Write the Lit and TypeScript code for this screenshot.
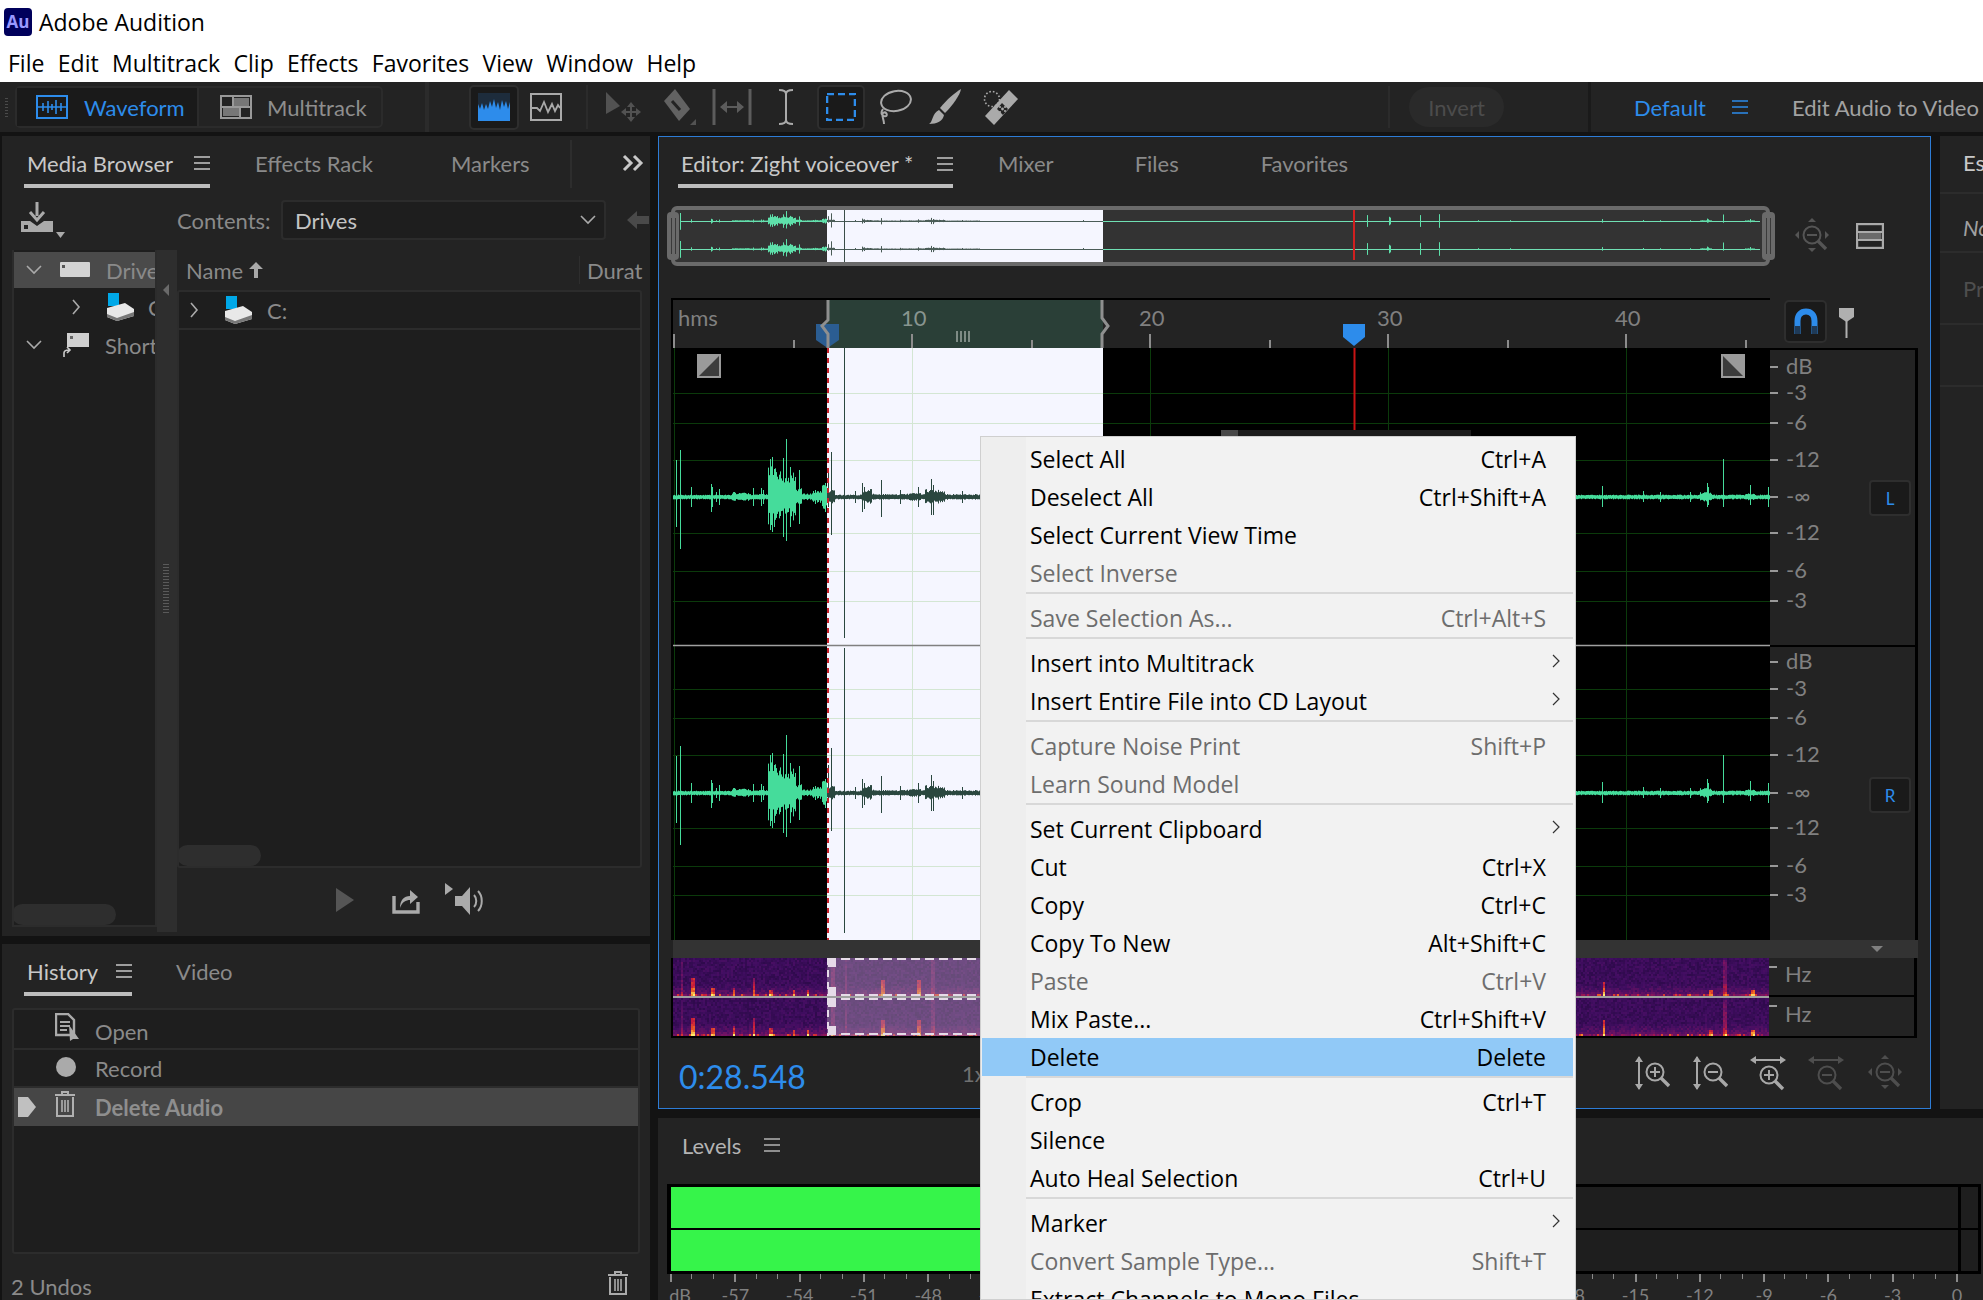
import { LitElement, html, css, svg } from "lit";
import { customElement } from "lit/decorators.js";

// spikes: x, up, down
const SPIKES: number[][] = [
  [676,37,30],[680,47,52],[691,10,10],[711,13,15],[712,10,10],[719,8,8],[716,5,5],[753,9,9],[761,9,9],[763,7,7],[770,38,33],[772,40,35],[774,28,30],
  [786,58,44],[783,39,40],[790,30,30],[799,27,27],[815,7,7],[825,14,15],[828,28,10],[831,45,38],[844,0,0],[855,6,6],[862,14,15],[864,10,12],[881,17,20],[900,7,7],[918,10,10],[931,18,18],[933,12,18],[962,6,6],[1083,6,6],
  [1367,35,35],[1389,25,25],[1390,20,20],[1420,35,35],[1439,40,40],[1478,5,5],[1510,5,5],[1602,11,10],[1643,6,5],[1660,5,5],[1690,5,5],[1707,14,10],[1708,10,8],[1723,38,10],[1750,12,8],[1768,10,10]
];
const SEGS: number[][] = [[732,750,5],[750,768,3],[768,778,31],[778,796,26],[796,802,9],[802,812,4],[812,822,6],[822,827,14],[827,835,8],[862,872,8],[872,880,4],[880,900,3],[900,925,4],[925,945,8],[945,980,3],[1700,1712,5],[1745,1755,4]];
// spectrogram spikes: x, reach (fraction of channel height), strength
const SPEC_SPIKES: number[][] = [[681,.95,.18],[692,.5,.42],[712,.22,.34],[733,.25,.3],[753,.5,.32],[770,.2,.3],[793,.18,.3],[807,.18,.3],[832,.9,.2],[845,.95,.16],[882,.45,.4],[918,.45,.36],[932,.95,.18],[1603,.42,.42],[1710,.18,.3],[1724,1,.26],[1752,.18,.36]];

function mkRand(seed: number) { let s = seed >>> 0; return () => { s = (s * 1664525 + 1013904223) >>> 0; return s / 4294967296; }; }

function wavePaths(cy: number, scale: number, min: number, seed: number) {
  const r = mkRand(seed);
  const inSel = (x: number) => x >= 827 && x < 1103;
  let g = ""; let d = "";
  for (let x = 673; x < 1770; x++) {
    let up = min + r() * min * 0.6; let dn = min + r() * min * 0.6;
    for (const s of SEGS) if (x >= s[0] && x < s[1]) { const a = s[2] * (0.55 + r() * 0.45) * scale; up = Math.max(up, a); dn = Math.max(dn, a * (0.7 + r() * 0.3)); }
    for (const p of SPIKES) if (p[0] === x && p[1] > 0) { up = Math.max(up, p[1] * scale); dn = Math.max(dn, p[2] * scale); }
    const seg = `M${x + 0.5} ${(cy - up).toFixed(1)}V${(cy + dn).toFixed(1)}`;
    if (inSel(x)) d += seg; else g += seg;
  }
  return { g, d };
}

const GRID_Y = [393, 423, 460, 533, 571, 601, 689, 718, 755, 828, 866, 895];
const GRID_X = [674, 912, 1150, 1388, 1626];

function waveSvg() {
  const a = wavePaths(497, 1, 1.5, 7);
  const b = wavePaths(793, 1, 1.5, 7);
  return html`<svg class="wave" viewBox="673 348 1097 592" width="1097" height="592">
    <rect x="827" y="348" width="276" height="592" fill="#f5f6ff"></rect>
    ${GRID_Y.map(y => svg`<path d="M673 ${y + .5}H827" stroke="#0b3a0b"></path><path d="M827 ${y + .5}H1103" stroke="#d3e6d3"></path><path d="M1103 ${y + .5}H1770" stroke="#0b3a0b"></path>`)}
    ${GRID_X.map(x => svg`<path d="M${x + .5} 348V940" stroke="${x > 827 && x < 1103 ? "#d3e6d3" : "#0b3a0b"}"></path>`)}
    <path d="M673 497.5H827M1103 497.5H1770M673 793.5H827M1103 793.5H1770" stroke="#45dc9b"></path>
    <path d=${a.g + b.g} stroke="#45dc9b" fill="none"></path>
    <path d="M827 497.5H1103M827 793.5H1103" stroke="#1f3a33" stroke-width="2"></path>
    <path d=${a.d + b.d} stroke="#2a473f" fill="none"></path>
    <path d="M844.5 348V638M844.5 648V933" stroke="#2a473f" fill="none"></path>
    <path d="M1354.5 348V600" stroke="#c81414" stroke-width="2"></path>
    <path d="M673 645.5H827" stroke="#a0a0a0" stroke-width="1.4"></path>
    <path d="M827 645.5H1103" stroke="#808080" stroke-width="1.4"></path>
    <path d="M1103 645.5H1770" stroke="#a0a0a0" stroke-width="1.4"></path>
    <path d="M828 348V940" stroke="#c8202a" stroke-width="2" stroke-dasharray="5 5"></path>
    <g>
      <rect x="697" y="354" width="24" height="24" fill="#9a9a9a"></rect><path d="M699 376L719 356V376Z" fill="#3c3c3c"></path>
      <rect x="1721" y="354" width="24" height="24" fill="#9a9a9a"></rect><path d="M1723 356L1743 376H1723Z" fill="#3c3c3c"></path>
    </g>
  </svg>`;
}

function overviewSvg() {
  const a = wavePaths(221, 0.17, 0.01, 3);
  const b = wavePaths(249, 0.17, 0.01, 3);
  return html`<svg class="ov" viewBox="664 204 1114 64" width="1114" height="64">
    <rect x="673" y="208" width="1095" height="56" rx="4" fill="#333" stroke="#6a6a6a" stroke-width="4"></rect>
    <rect x="827" y="210" width="276" height="52" fill="#f5f6ff"></rect>
    <path d="M680 221.5H827M1103 221.5H1760M680 249.5H827M1103 249.5H1760" stroke="#70e0b4"></path>
    <path d="M827 221.5H1103M827 249.5H1103" stroke="#4a5c57"></path>
    <path d=${a.g + b.g} stroke="#5ee0aa" fill="none"></path>
    <path d=${a.d + b.d} stroke="#4a5c57" fill="none"></path>
    <path d="M844.5 210V262" stroke="#3b4e49"></path>
    <path d="M1354 210V260" stroke="#d02020" stroke-width="2"></path>
    <rect x="667" y="212" width="12" height="48" rx="4" fill="#6a6a6a"></rect><path d="M671.5 218V254M675.5 218V254" stroke="#3a3a3a"></path>
    <rect x="1762" y="212" width="13" height="48" rx="4" fill="#6a6a6a"></rect><path d="M1766.5 218V254M1770.5 218V254" stroke="#3a3a3a"></path>
  </svg>`;
}

const TICKS_MAJOR = [674, 912, 1150, 1388, 1626];
const TICKS_MINOR = [794, 1032, 1270, 1508, 1746];
function rulerSvg() {
  return html`<svg class="rsvg" viewBox="673 300 1097 48" width="1097" height="48">
    <rect x="827" y="300" width="276" height="48" fill="#2a3f37"></rect>
    ${TICKS_MAJOR.map(x => svg`<path d="M${x} 334V348" stroke="#8c8c8c" stroke-width="2"></path>`)}
    ${TICKS_MINOR.map(x => svg`<path d="M${x} 340V348" stroke="#8c8c8c" stroke-width="2"></path>`)}
    <path d="M957 331V342M961 331V342M965 331V342M969 331V342" stroke="#9aa5a0" stroke-width="1.5"></path>
    <path d="M816 324H839V340L827.5 348L816 340Z" fill="#2b5d92"></path>
    <path d="M828 300V320L822 326L828 334V348" stroke="#8f8f8f" stroke-width="3" fill="none"></path>
    <path d="M1102 300V318L1108 326L1102 334V348" stroke="#8f8f8f" stroke-width="3" fill="none"></path>
    <path d="M1343 324H1365V337L1354 346L1343 337Z" fill="#2d8ceb"></path>
  </svg>`;
}

const I = {
  ham: html`<svg class="ham" viewBox="0 0 16 14" width="16" height="14"><path d="M0 1H16M0 7H16M0 13H16" stroke="currentColor" stroke-width="1.6"></path></svg>`,
  chevR: html`<svg viewBox="0 0 10 18" width="10" height="18"><path d="M2 2L8 9L2 16" fill="none" stroke="#aaa" stroke-width="1.6"></path></svg>`,
  chevD: html`<svg viewBox="0 0 16 10" width="16" height="10"><path d="M1 1L8 8L15 1" fill="none" stroke="#aaa" stroke-width="1.6"></path></svg>`,
  drive: html`<svg viewBox="0 0 30 28" width="30" height="28"><rect x="3" y="0" width="11" height="13" fill="#00a8e8"></rect><path d="M2 15L20 10L29 16V23L12 28L2 24Z" fill="#e8e8e8"></path><path d="M2 21L12 25L29 19V23L12 28L2 24Z" fill="#777"></path></svg>`,
};

const tb = {
  waveform: html`<svg viewBox="0 0 32 24" width="32" height="24"><rect x="1" y="1" width="30" height="22" fill="none" stroke="#2d8ceb" stroke-width="2"></rect><path d="M1 12H31M7 8V16M12 6V18M16 9V15M20 5V19M25 8V16" stroke="#2d8ceb" stroke-width="1.6"></path></svg>`,
  multi: html`<svg viewBox="0 0 32 24" width="32" height="24"><rect x="1" y="1" width="30" height="22" fill="none" stroke="#999" stroke-width="2"></rect><rect x="13" y="3" width="16" height="8" fill="#777"></rect><rect x="3" y="13" width="17" height="8" fill="#777"></rect><path d="M1 12H31M13 1V12M20 12V23" stroke="#999" stroke-width="2"></path></svg>`,
  vw: html`<svg viewBox="0 0 32 28" width="32" height="28"><rect x="0" y="0" width="32" height="28" fill="#2d8ceb"></rect><path d="M0 0H32V9L30 16L28 8L26 14L24 7L22 17L20 9L18 15L16 6L14 14L12 8L10 16L8 11L6 17L4 10L2 16L0 11Z" fill="#1d2c3c"></path></svg>`,
  vw2: html`<svg viewBox="0 0 32 28" width="32" height="28"><rect x="1" y="1" width="30" height="26" fill="none" stroke="#aaa" stroke-width="2"></rect><path d="M2 15H7L10 18L14 9L18 19L22 11L25 18L28 12L30 15" fill="none" stroke="#aaa" stroke-width="1.8"></path></svg>`,
  move: html`<svg viewBox="0 0 36 30" width="36" height="30"><path d="M1 0L15 14L1 22Z" fill="#525252"></path><path d="M26 12V29M18 20H35" stroke="#525252" stroke-width="2"></path><path d="M26 10L22 15H30ZM26 30L22 25H30ZM16 20L21 16V24ZM36 20L31 16V24Z" fill="#525252"></path></svg>`,
  razor: html`<svg viewBox="0 0 34 36" width="34" height="36"><path d="M2 12L13 0L28 20L17 32Z" fill="#626262"></path><path d="M10 12L18 21" stroke="#232323" stroke-width="3"></path><path d="M34 30V36H28Z" fill="#525252"></path></svg>`,
  slip: html`<svg viewBox="0 0 40 36" width="40" height="36"><path d="M2 0V36M38 0V36" stroke="#5c5c5c" stroke-width="3"></path><path d="M9 18H31" stroke="#5c5c5c" stroke-width="2"></path><path d="M8 18L15 12V24ZM32 18L25 12V24Z" fill="#5c5c5c"></path></svg>`,
  ibeam: html`<svg viewBox="0 0 20 36" width="20" height="36"><path d="M3 1C7 1 10 2 10 5V31C10 34 7 35 3 35M17 1C13 1 10 2 10 5M17 35C13 35 10 34 10 31" fill="none" stroke="#aaa" stroke-width="2"></path></svg>`,
  marquee: html`<svg viewBox="0 0 30 28" width="30" height="28"><rect x="1" y="1" width="28" height="26" fill="none" stroke="#2d8ceb" stroke-width="2.6" stroke-dasharray="7 4"></rect></svg>`,
  lasso: html`<svg viewBox="0 0 36 36" width="36" height="36"><ellipse cx="20" cy="12" rx="15" ry="10" transform="rotate(-10 20 12)" fill="none" stroke="#aaa" stroke-width="2"></ellipse><path d="M7 20C4 24 6 28 10 27C12 26 10 22 7 24C5 26 8 30 8 35" fill="none" stroke="#aaa" stroke-width="2"></path></svg>`,
  brush: html`<svg viewBox="0 0 34 36" width="34" height="36"><path d="M32 0C31 6 24 16 16 24L11 19C18 10 27 3 32 0Z" fill="#aaa"></path><path d="M10 21L15 26C14 32 8 35 0 35C4 33 3 24 10 21Z" fill="#aaa"></path></svg>`,
  heal: html`<svg viewBox="0 0 36 36" width="36" height="36"><circle cx="9" cy="10" r="7.5" fill="none" stroke="#aaa" stroke-width="1.6" stroke-dasharray="1.6 2"></circle><path d="M26 1L35 10L11 36L2 27Z" fill="#aaa"></path><path d="M14 20L19 14L25 20L20 26Z" fill="#232323"></path><circle cx="19.5" cy="20" r="1.4" fill="#aaa"></circle><circle cx="17" cy="18" r="1.1" fill="#aaa"></circle><circle cx="22" cy="18" r="1.1" fill="#aaa"></circle><circle cx="17" cy="23" r="1.1" fill="#aaa"></circle><circle cx="22" cy="22" r="1.1" fill="#aaa"></circle></svg>`,
};

function zoomIcon(kind: "vp" | "vm" | "hp" | "hm" | "all", color: string) {
  const plus = kind === "vp" || kind === "hp";
  const v = kind === "vp" || kind === "vm";
  const h = kind === "hp" || kind === "hm";
  const cx = v ? 21 : 19; const cy = v ? 17 : h ? 20 : 17;
  return html`<svg viewBox="0 0 36 36" width="36" height="36" fill="none" stroke=${color}>
    ${v ? svg`<path d="M5 2V34" stroke-width="2"></path><path d="M5 1L1 7H9ZM5 35L1 29H9Z" fill=${color} stroke="none"></path>` : ""}
    ${h ? svg`<path d="M2 5H34" stroke-width="2"></path><path d="M0 5L6 1V9ZM36 5L30 1V9Z" fill=${color} stroke="none"></path>` : ""}
    ${kind === "all" ? svg`<path d="M19 0L15 4H23ZM19 34L15 30H23ZM2 17L6 13V21ZM36 17L32 13V21Z" fill=${color} stroke="none"></path>` : ""}
    <circle cx=${cx} cy=${cy} r="8.5" stroke-width="2"></circle>
    <path d=${`M${cx - 5} ${cy}H${cx + 5}`} stroke-width="2"></path>
    ${plus ? svg`<path d=${`M${cx} ${cy - 5}V${cy + 5}`} stroke-width="2"></path>` : ""}
    <path d=${`M${cx + 6} ${cy + 6}L${cx + 14} ${cy + 14}`} stroke-width="3.4"></path>
  </svg>`;
}

type MI = { t?: string; k?: string; d?: boolean; sub?: boolean; hot?: boolean; sep?: boolean };
const MENU: MI[] = [
  { t: "Select All", k: "Ctrl+A" }, { t: "Deselect All", k: "Ctrl+Shift+A" }, { t: "Select Current View Time" }, { t: "Select Inverse", d: true }, { sep: true },
  { t: "Save Selection As...", k: "Ctrl+Alt+S", d: true }, { sep: true },
  { t: "Insert into Multitrack", sub: true }, { t: "Insert Entire File into CD Layout", sub: true }, { sep: true },
  { t: "Capture Noise Print", k: "Shift+P", d: true }, { t: "Learn Sound Model", d: true }, { sep: true },
  { t: "Set Current Clipboard", sub: true }, { t: "Cut", k: "Ctrl+X" }, { t: "Copy", k: "Ctrl+C" }, { t: "Copy To New", k: "Alt+Shift+C" }, { t: "Paste", k: "Ctrl+V", d: true }, { t: "Mix Paste...", k: "Ctrl+Shift+V" }, { t: "Delete", k: "Delete", hot: true }, { sep: true },
  { t: "Crop", k: "Ctrl+T" }, { t: "Silence" }, { t: "Auto Heal Selection", k: "Ctrl+U" }, { sep: true },
  { t: "Marker", sub: true }, { t: "Convert Sample Type...", k: "Shift+T", d: true }, { t: "Extract Channels to Mono Files" },
];

const DB1: [string, number][] = [["dB", 366], ["-3", 392], ["-6", 422], ["-12", 459], ["-∞", 496], ["-12", 532], ["-6", 570], ["-3", 600]];
const DB2: [string, number][] = [["dB", 661], ["-3", 688], ["-6", 717], ["-12", 754], ["-∞", 792], ["-12", 827], ["-6", 865], ["-3", 894]];
const RULER_LABELS: [string, number][] = [["hms", 678], ["10", 901], ["20", 1139], ["30", 1377], ["40", 1615]];
const LEVEL_VALUES = [-57, -54, -51, -48, -45, -42, -39, -36, -33, -30, -27, -24, -21, -18, -15, -12, -9, -6, -3, 0];

function drawSpec(c: HTMLCanvasElement) {
  const ctx = c.getContext("2d")!;
  const W = c.width;
  const stops: [number, number[]][] = [[0, [22, 6, 48]], [0.28, [66, 14, 98]], [0.5, [120, 20, 100]], [0.68, [200, 28, 60]], [0.84, [245, 110, 30]], [1, [255, 235, 110]]];
  const cmap = (v: number) => {
    v = Math.max(0, Math.min(1, v));
    for (let i = 1; i < stops.length; i++) if (v <= stops[i][0]) {
      const [a, ca] = stops[i - 1]; const [b, cb] = stops[i]; const t = (v - a) / (b - a);
      return ca.map((q, j) => q + (cb[j] - q) * t);
    }
    return stops[stops.length - 1][1];
  };
  const r = mkRand(11);
  for (const [y0, ch] of [[0, 38], [40, 37]] as number[][]) {
    for (let y = 0; y < ch; y += 2) {
      const t = y / ch;
      for (let x = 0; x < W; x += 2) {
        const px = x + 673;
        let v = 0.16 + r() * 0.15;
        if (t > 0.68) v += (t - 0.68) * 0.62;
        if (t > 0.94) v += 0.14 * r() + (r() > 0.75 ? 0.25 : 0);
        for (const s of SPEC_SPIKES) {
          if (Math.abs(px - s[0]) <= 1) { if (1 - t < s[1]) v += s[2] * (0.7 + 0.6 * t); }
        }
        let col = cmap(v);
        if (px >= 827 && px < 1103) col = col.map((q, j) => q * 0.62 + [255, 240, 255][j] * 0.38 * 0.75);
        ctx.fillStyle = `rgb(${col[0] | 0},${col[1] | 0},${col[2] | 0})`;
        ctx.fillRect(x, y0 + y, 2, 2);
      }
    }
    // selection outline
    ctx.fillStyle = "#e6dbe8";
    for (let x = 154; x < 430; x += 14) { ctx.fillRect(x, y0, 9, 2); ctx.fillRect(x, y0 + ch - 2, 9, 2); }
    for (let y = 0; y < ch; y += 12) { ctx.fillRect(154, y0 + y, 2, 7); }
    ctx.fillRect(155, y0 + 1, 8, 8); ctx.fillRect(155, y0 + ch - 9, 8, 8);
  }
  ctx.fillStyle = "#a0a0a0"; ctx.fillRect(0, 38, W, 2);
}

@customElement("app-root")
export class AppRoot extends LitElement {
  static styles = css`
    :host { display: block; width: 1983px; height: 1300px; position: relative; overflow: hidden; background: #131313; font-family: "Lato", sans-serif; font-size: 22px; color: #8a8a8a; }
    svg { display: block; flex: none; }
    .sys { font-family: "Open Sans", sans-serif; color: #000; background: #fff; }
    .title { height: 42px; display: flex; align-items: center; padding-left: 4px; gap: 7px; font-size: 23px; box-sizing: border-box; padding-top: 1px; }
    .au { width: 28px; height: 28px; border-radius: 4px; background: #00005b; color: #9999ff; font-size: 17px; font-weight: 700; display: flex; align-items: center; justify-content: center; font-family: "Open Sans", sans-serif; }
    .menubar { height: 40px; display: flex; align-items: center; padding: 2px 0 0 8px; gap: 13.4px; font-size: 23px; box-sizing: border-box; }
    .toolbar { height: 50px; background: #232323; display: flex; align-items: center; position: relative; white-space: nowrap; padding-left: 15px; box-sizing: border-box; }
    .grip { position: absolute; left: 5px; top: 16px; width: 3px; height: 20px; background: repeating-linear-gradient(#4a4a4a 0 1px, transparent 1px 3px); }
    .seg { display: flex; height: 42px; width: 368px; border: 2px solid #2b2b2b; box-sizing: border-box; border-radius: 5px; }
    .seg > div { display: flex; align-items: center; }
    .seg .on { width: 180px; background: #1a1a1a; color: #2d8ceb; padding-left: 19px; gap: 16px; box-sizing: border-box; }
    .seg .off { flex: 1; border-left: 2px solid #2b2b2b; color: #8e8e8e; padding-left: 21px; gap: 15px; }
    .tbtn { display: flex; align-items: center; justify-content: center; flex: none; }
    .tbtn.act { background: #1a1a1a; border: 2px solid #2e2e2e; border-radius: 5px; height: 45px; box-sizing: border-box; }
    .dv { height: 50px; background: #2b2b2b; flex: none; width: 4px; }
    .dv.d1 { margin-left: 42px; }
    .t1 { margin-left: 40px; width: 50px; }
    .t2 { margin-left: 11px; width: 32px; }
    .dv.d2 { margin-left: 24px; width: 2px; height: 44px; }
    .t3 { margin-left: 17px; width: 36px; }
    .t4 { margin-left: 21px; width: 34px; }
    .t5 { margin-left: 16px; width: 40px; }
    .t6 { margin-left: 24px; width: 20px; }
    .t7 { margin-left: 21px; width: 48px; }
    .t8 { margin-left: 11px; width: 36px; }
    .t9 { margin-left: 16px; width: 36px; }
    .t10 { margin-left: 18px; width: 38px; }
    .dv.d3 { margin-left: 368px; width: 2px; height: 42px; }
    .invert { margin-left: 19px; width: 95px; height: 40px; border-radius: 20px; background: #2a2a2a; color: #4c4c4c; display: flex; align-items: center; justify-content: center; flex: none; }
    .dv.d4 { margin-left: 84px; width: 3px; background: #1a1a1a; }
    .def { margin-left: 43px; color: #2d8ceb; display: flex; align-items: center; gap: 26px; flex: none; }
    .edit { margin-left: 44px; color: #a2a2a2; flex: none; }
    .work { display: flex; padding: 4px 0 0 2px; gap: 8px; height: 1218px; box-sizing: border-box; }
    .leftcol { width: 648px; flex: none; display: flex; flex-direction: column; gap: 8px; }
    .panel { background: #232323; box-sizing: border-box; }
    .mb { height: 800px; display: flex; flex-direction: column; }
    .tabs { display: flex; align-items: flex-end; height: 52px; box-sizing: border-box; position: relative; flex: none; }
    .tab { height: 52px; box-sizing: border-box; display: flex; align-items: center; padding: 6px 0 4px; white-space: nowrap; flex: none; }
    .tab.on { color: #c8c8c8; border-bottom: 4px solid #bdbdbd; padding-bottom: 0; justify-content: space-between; padding-left: 3px; }
    .tabs.m { padding-left: 22px; }
    .tabs.m .tab.on { width: 186px; }
    .tabs.m .e { margin-left: 45px; }
    .tabs.m .k { margin-left: 78px; }
    .tabs.m .vd { position: absolute; left: 568px; top: 4px; width: 2px; height: 48px; background: #2d2d2d; }
    .tabs.m .more { position: absolute; left: 620px; top: 18px; }
    .ctr { display: flex; align-items: center; height: 40px; margin-top: 12px; flex: none; padding-left: 19px; }
    .ctr .lbl { margin-left: 112px; width: 104px; flex: none; }
    .dropdown { width: 325px; height: 40px; background: #1e1e1e; border: 2px solid #2c2c2c; border-radius: 4px; box-sizing: border-box; color: #c4c4c4; display: flex; align-items: center; justify-content: space-between; padding: 0 8px 0 12px; }
    .back { margin-left: 21px; }
    .split { display: flex; margin-top: 10px; padding-left: 10px; height: 682px; }
    .tree { width: 145px; height: 677px; background: #1e1e1e; border: 2px solid #2c2c2c; border-top: none; box-sizing: border-box; position: relative; overflow: hidden; flex: none; }
    .trow { height: 38px; display: flex; align-items: center; white-space: nowrap; overflow: hidden; }
    .trow.on { background: #4a4a4a; height: 36px; margin-top: 2px; }
    .trow .c { width: 16px; display: flex; justify-content: center; flex: none; }
    .sp1 { margin-left: 12px; }
    .sp2 { margin-left: 54px; }
    .ti1 { margin-left: 18px; }
    .tl1 { margin-left: 16px; }
    .ti2 { margin-left: 21px; flex: none; }
    .tl2 { margin-left: 13px; }
    .ti3 { margin-left: 21px; }
    .tl3 { margin-left: 16px; }
    .thumb { background: #2e2e2e; border-radius: 11px; position: absolute; height: 21px; }
    .tree .thumb { left: -2px; bottom: 0; width: 104px; }
    .splitter { width: 20px; background: #2e2e2e; flex: none; position: relative; }
    .splitter .a { position: absolute; left: 6px; top: 34px; width: 0; height: 0; border: 6px solid transparent; border-right-color: #6a6a6a; border-left: none; }
    .splitter .dots { position: absolute; left: 6px; top: 314px; width: 6px; height: 50px; background: repeating-linear-gradient(#5a5a5a 0 1px, transparent 1px 3px); }
    .rightc { width: 465px; flex: none; display: flex; flex-direction: column; }
    .lh { height: 40px; display: flex; align-items: center; position: relative; padding-left: 9px; gap: 5px; box-sizing: border-box; flex: none; }
    .lh .dur { position: absolute; left: 410px; }
    .lh .vd { position: absolute; left: 402px; top: 6px; width: 1px; height: 28px; background: #2e2e2e; }
    .list { height: 578px; background: #1e1e1e; border: 2px solid #2c2c2c; border-radius: 3px; box-sizing: border-box; position: relative; overflow: hidden; }
    .list .thumb { left: -2px; bottom: 0; width: 84px; }
    .lrow { height: 38px; border-bottom: 2px solid #2c2c2c; display: flex; align-items: center; box-sizing: border-box; padding-left: 10px; }
    .lr1 { margin-left: 24px; }
    .lr2 { margin-left: 14px; }
    .trans { height: 64px; display: flex; align-items: center; padding-left: 159px; }
    .trans .p2 { margin-left: 38px; }
    .trans .p3 { margin-left: 25px; }
    .hist { height: 356px; display: flex; flex-direction: column; position: relative; }
    .tabs.h { padding-left: 22px; height: 52px; }
    .tabs.h .tab.on { width: 108px; }
    .tabs.h .v { margin-left: 44px; }
    .hlist { margin: 12px 10px 0; height: 246px; background: #1e1e1e; border: 2px solid #2c2c2c; border-radius: 3px; box-sizing: border-box; flex: none; }
    .hrow { height: 38px; border-bottom: 2px solid #2c2c2c; display: flex; align-items: center; box-sizing: border-box; position: relative; padding-left: 81px; }
    .hrow .ic { position: absolute; left: 41px; top: 3px; }
    .hrow .ic.rec { top: 5px; }
    .hrow.on { background: #464646; font-weight: 700; color: #8e8e8e; height: 38px; border-bottom: none; margin-top: 0; }
    .hrow.on .arr { position: absolute; left: 4px; top: 9px; }
    .hrow.first { height: 40px; padding-top: 4px; }
    .hfoot { display: flex; justify-content: space-between; align-items: flex-start; padding: 17px 22px 0 9px; }
    .hfoot span { margin-top: 2px; }
    .center { flex: 1; display: flex; flex-direction: column; gap: 9px; min-width: 0; }
    .toprow { display: flex; gap: 9px; height: 973px; flex: none; }
    .editor { width: 1273px; flex: none; border: 1px solid #2d7cd6; box-sizing: border-box; background: #232323; display: flex; flex-direction: column; position: relative; overflow: hidden; }
    .tabs.ed { padding-left: 19px; height: 51px; }
    .tabs.ed .tab { height: 51px; }
    .tabs.ed .tab.on { width: 275px; }
    .tabs.ed .a { margin-left: 45px; }
    .tabs.ed .b { margin-left: 81px; }
    .tabs.ed .c { margin-left: 82px; }
    .ovrow { display: flex; align-items: center; margin-top: 16px; padding-left: 5px; height: 64px; flex: none; }
    .ovrow .z { margin-left: 15px; }
    .ovrow .l { margin-left: 27px; }
    .rulrow { display: flex; margin-top: 30px; padding-left: 12px; height: 50px; flex: none; }
    .ruler { width: 1099px; height: 50px; background: #232323; border-top: 2px solid #000; border-left: 2px solid #000; box-sizing: border-box; position: relative; flex: none; }
    .rsvg { position: absolute; left: 0; top: 0; }
    .rl { position: absolute; top: 5px; color: #808080; line-height: 26px; }
    .rl.in { color: #88958f; }
    .mag { margin-left: 14px; margin-top: 2px; width: 43px; height: 43px; background: #1a1a1a; border: 2px solid #2e2e2e; border-radius: 5px; box-sizing: border-box; display: flex; align-items: center; justify-content: center; flex: none; }
    .pin { margin-left: 12px; margin-top: 10px; }
    .waverow { display: flex; padding-left: 12px; height: 592px; flex: none; }
    .wave { border-left: 2px solid #000; box-sizing: content-box; background: #000; }
    .scale { width: 148px; height: 592px; border-top: 2px solid #000; border-right: 3px solid #000; box-sizing: border-box; position: relative; flex: none; }
    .dbt { position: absolute; left: 16px; line-height: 24px; color: #808080; transform: translateY(-50%); }
    .chd { position: absolute; left: 0; right: 0; height: 2px; background: #000; }
    .tk { position: absolute; left: 0; width: 8px; height: 2px; background: #999; }
    .lr { position: absolute; left: 99px; width: 42px; height: 36px; background: #1a1a1a; border: 2px solid #2e2e2e; border-radius: 4px; box-sizing: border-box; color: #2d8ceb; display: flex; align-items: center; justify-content: center; font-size: 17px; }
    .gbar { height: 18px; margin-left: 14px; width: 1245px; background: #333; flex: none; position: relative; }
    .gbar i { position: absolute; left: 1198px; top: 6px; border: 6px solid transparent; border-top-color: #808080; border-bottom: none; }
    .specrow { display: flex; padding-left: 12px; height: 80px; flex: none; }
    .spec { border-left: 2px solid #000; border-bottom: 2px solid #000; display: block; }
    .hzc { width: 148px; border-right: 3px solid #000; border-bottom: 2px solid #000; box-sizing: border-box; display: flex; flex-direction: column; flex: none; }
    .hz { height: 39px; display: flex; align-items: center; padding: 0 0 6px 16px; color: #808080; position: relative; box-sizing: border-box; }
    .hz.a { border-bottom: 2px solid #000; }
    .hz::before { content: ""; position: absolute; left: 0; top: 8px; width: 8px; height: 2px; background: #999; }
    .timerow { flex: 1; display: flex; align-items: center; padding: 0 0 0 20px; position: relative; }
    .time { color: #2d8ceb; font-size: 32px; width: 283px; flex: none; padding-top: 7px; }
    .x1 { color: #707070; font-size: 22px; }
    .zooms { position: absolute; left: 975px; top: 17px; display: flex; gap: 22px; }
    .rightp { flex: 1; display: flex; flex-direction: column; min-width: 0; overflow: hidden; }
    .rp { height: 62px; border-bottom: 2px solid #2c2c2c; box-sizing: border-box; padding: 14px 0 0 23px; white-space: nowrap; flex: none; }
    .rp.a { height: 58px; color: #c8c8c8; padding-top: 13px; }
    .rp.b { height: 59px; font-style: italic; color: #a0a0a0; padding-top: 20px; }
    .rp.c { height: 72px; color: #4e4e4e; padding-top: 22px; }
    .levels { height: 182px; display: flex; flex-direction: column; }
    .lt { height: 54px; display: flex; align-items: center; padding-left: 24px; gap: 23px; color: #b4b4b4; flex: none; }
    .meter { margin: 12px 0 0 9px; width: 1314px; height: 90px; border: 3px solid #000; border-left-width: 4px; box-sizing: border-box; background: #000; display: grid; grid-template-columns: 1fr 17px; grid-template-rows: 1fr 1fr; gap: 2px 3px; flex: none; }
    .mc { background: #1e1e1e; }
    .mc .g { height: 100%; width: 504px; background: #36f44a; }
    .lscale { position: relative; height: 26px; }
    .lt1 { position: absolute; top: 0; width: 2px; height: 8px; background: #8a8a8a; }
    .lt1.s { width: 1px; height: 5px; }
    .ll { position: absolute; top: 9px; font-size: 18px; color: #808080; transform: translateX(-50%); line-height: 24px; }
    .menu { position: absolute; left: 980px; top: 436px; width: 596px; height: 864px; box-sizing: border-box; border: 1px solid #cfcfcf; background: linear-gradient(90deg, #eeeeee 45px, #f2f2f2 45px); padding-top: 3px; font-family: "Open Sans", sans-serif; font-size: 23px; color: #000; overflow: hidden; }
    .mi { height: 38px; display: flex; align-items: center; justify-content: space-between; padding: 0 27px 0 48px; margin: 0 2px 0 1px; position: relative; white-space: nowrap; }
    .mi.dis { color: #6d6d6d; }
    .mi.hot { background: #91c9f7; }
    .mi .sub { position: absolute; right: 13px; top: 10px; }
    .msep { height: 7px; margin: 0 2px 0 45px; border-top: 2px solid #d8d8d8; box-sizing: border-box; padding-top: 0; }
    .behind { position: absolute; left: 1221px; top: 430px; width: 250px; height: 6px; background: #1c1c1c; }
    .behind i { display: block; width: 17px; height: 6px; background: #484848; }
  `;

  firstUpdated() {
    const c = this.renderRoot.querySelector("canvas");
    if (c) drawSpec(c as HTMLCanvasElement);
  }

  render() {
    return html`
      <div class="sys title"><span class="au">Au</span><span>Adobe Audition</span></div>
      <div class="sys menubar">${["File", "Edit", "Multitrack", "Clip", "Effects", "Favorites", "View", "Window", "Help"].map(m => html`<span>${m}</span>`)}</div>
      ${this.toolbar()}
      <div class="work">
        <div class="leftcol">${this.media()}${this.history()}</div>
        <div class="center">
          <div class="toprow">${this.editor()}${this.right()}</div>
          ${this.levels()}
        </div>
      </div>
      <div class="behind"><i></i></div>
      ${this.menu()}
    `;
  }

  toolbar() {
    return html`<div class="toolbar">
      <div class="grip"></div>
      <div class="seg"><div class="on">${tb.waveform}<span>Waveform</span></div><div class="off">${tb.multi}<span>Multitrack</span></div></div>
      <div class="dv d1"></div>
      <div class="tbtn t1 act">${tb.vw}</div>
      <div class="tbtn t2">${tb.vw2}</div>
      <div class="dv d2"></div>
      <div class="tbtn t3">${tb.move}</div>
      <div class="tbtn t4">${tb.razor}</div>
      <div class="tbtn t5">${tb.slip}</div>
      <div class="tbtn t6">${tb.ibeam}</div>
      <div class="tbtn t7 act">${tb.marquee}</div>
      <div class="tbtn t8">${tb.lasso}</div>
      <div class="tbtn t9">${tb.brush}</div>
      <div class="tbtn t10">${tb.heal}</div>
      <div class="dv d3"></div>
      <div class="invert">Invert</div>
      <div class="dv d4"></div>
      <div class="def"><span>Default</span>${I.ham}</div>
      <div class="edit">Edit Audio to Video</div>
    </div>`;
  }

  media() {
    return html`<div class="panel mb">
      <div class="tabs m">
        <div class="tab on"><span>Media Browser</span>${I.ham}</div>
        <div class="tab e">Effects Rack</div>
        <div class="tab k">Markers</div>
        <div class="vd"></div>
        <svg class="more" viewBox="0 0 22 18" width="22" height="18"><path d="M2 2L9 9L2 16M12 2L19 9L12 16" fill="none" stroke="#c8c8c8" stroke-width="3"></path></svg>
      </div>
      <div class="ctr">
        <svg viewBox="0 0 44 36" width="44" height="36"><path d="M16 0V14M9 10L16 18L23 10" fill="none" stroke="#aaa" stroke-width="3"></path><path d="M0 19H9L16 24L23 19H32V30H0Z" fill="#aaa"></path><rect x="3" y="23" width="4" height="4" fill="#232323"></rect><path d="M35 30H44L39.5 36Z" fill="#aaa"></path></svg>
        <span class="lbl">Contents:</span>
        <div class="dropdown"><span>Drives</span>${I.chevD}</div>
        <svg class="back" viewBox="0 0 22 20" width="22" height="20"><path d="M0 10L10 1V6H22V14H10V19Z" fill="#4a4a4a"></path></svg>
      </div>
      <div class="split">
        <div class="tree">
          <div class="trow on"><span class="c sp1">${I.chevD}</span>
            <svg class="ti1" viewBox="0 0 30 16" width="30" height="16"><rect width="30" height="15" rx="1" fill="#d4d4d4"></rect><rect x="2" y="3" width="3" height="3" fill="#555"></rect></svg>
            <span class="tl1">Drives</span></div>
          <div class="trow"><span class="c sp2">${I.chevR}</span><span class="ti2">${I.drive}</span><span class="tl2">C:</span></div>
          <div class="trow"><span class="c sp1">${I.chevD}</span>
            <svg class="ti3" viewBox="0 0 26 26" width="26" height="26"><rect x="4" y="1" width="22" height="14" fill="#d0d0d0"></rect><rect x="7" y="4" width="3" height="3" fill="#666"></rect><path d="M1 25V21C1 19 3 18 6 18M4 15L7 18L4 21" stroke="#ccc" fill="none" stroke-width="1.6"></path></svg>
            <span class="tl3">Shortcuts</span></div>
          <div class="thumb"></div>
        </div>
        <div class="splitter"><span class="a"></span><span class="dots"></span></div>
        <div class="rightc">
          <div class="lh"><span>Name</span>
            <svg viewBox="0 0 16 18" width="16" height="18"><path d="M8 1L1 8H6V17H10V8H15Z" fill="#a8a8a8"></path></svg>
            <span class="vd"></span><span class="dur">Durat</span></div>
          <div class="list">
            <div class="lrow">${I.chevR}<span class="lr1">${I.drive}</span><span class="lr2">C:</span></div>
            <div class="thumb"></div>
          </div>
          <div class="trans">
            <svg viewBox="0 0 18 24" width="18" height="24"><path d="M0 0L18 12L0 24Z" fill="#555"></path></svg>
            <svg class="p2" viewBox="0 0 28 28" width="28" height="28"><path d="M2 10V26H26V16" fill="none" stroke="#aaa" stroke-width="3.4"></path><path d="M8 22C8 14 12 10 18 10V4L26 11L18 18V14C14 14 10 16 8 22Z" fill="#aaa"></path></svg>
            <svg class="p3" viewBox="0 0 40 34" width="40" height="34"><path d="M0 0L8 6L0 12Z" fill="#aaa"></path><path d="M10 13H17L25 4V32L17 23H10Z" fill="#aaa"></path><path d="M29 12C32 15 32 21 29 24M33 8C38 13 38 23 33 28" fill="none" stroke="#aaa" stroke-width="2"></path></svg>
          </div>
        </div>
      </div>
    </div>`;
  }

  history() {
    const trash = html`<svg viewBox="0 0 20 24" width="20" height="24"><path d="M0 4H20M7 4V1H13V4" fill="none" stroke="#aaa" stroke-width="2"></path><path d="M2 6V23H18V6" fill="none" stroke="#aaa" stroke-width="2"></path><path d="M7 8V20M10 8V20M13 8V20" stroke="#aaa" stroke-width="1.6"></path></svg>`;
    return html`<div class="panel hist">
      <div class="tabs h"><div class="tab on"><span>History</span>${I.ham}</div><div class="tab v">Video</div></div>
      <div class="hlist">
        <div class="hrow first"><svg class="ic" viewBox="0 0 24 28" width="24" height="28"><path d="M1 1H13L19 7V22H1Z" fill="none" stroke="#aaa" stroke-width="2.4"></path><path d="M5 9H15M5 13H15M5 17H12" stroke="#aaa" stroke-width="2"></path><path d="M14 12L24 26H18L15 28Z" fill="#aaa"></path></svg><span>Open</span></div>
        <div class="hrow"><svg class="ic rec" viewBox="0 0 22 24" width="22" height="24"><circle cx="11" cy="12" r="10" fill="#aaa"></circle></svg><span>Record</span></div>
        <div class="hrow on"><svg class="arr" viewBox="0 0 18 20" width="18" height="20"><path d="M0 0H10L18 10L10 20H0Z" fill="#c0c0c0"></path></svg><svg class="ic" viewBox="0 0 20 26" width="20" height="26"><path d="M0 4H20M7 4V1H13V4" fill="none" stroke="#b0b0b0" stroke-width="2"></path><path d="M2 6V25H18V6" fill="none" stroke="#b0b0b0" stroke-width="2"></path><path d="M7 9V21M10 9V21M13 9V21" stroke="#b0b0b0" stroke-width="1.6"></path></svg><span>Delete Audio</span></div>
      </div>
      <div class="hfoot"><span>2 Undos</span>${trash}</div>
    </div>`;
  }

  editor() {
    const muted = (x: number) => x > 827 && x < 1103;
    return html`<div class="editor">
      <div class="tabs ed">
        <div class="tab on"><span>Editor: Zight voiceover *</span>${I.ham}</div>
        <div class="tab a">Mixer</div><div class="tab b">Files</div><div class="tab c">Favorites</div>
      </div>
      <div class="ovrow">${overviewSvg()}
        <span class="z">${zoomIcon("all", "#555")}</span>
        <svg class="l" viewBox="0 0 28 26" width="28" height="26"><rect x="1" y="1" width="26" height="24" fill="none" stroke="#aaa" stroke-width="2.4"></rect><rect x="3" y="9" width="22" height="7" fill="#6a6a6a"></rect><path d="M1 9H27M1 17H27" stroke="#aaa" stroke-width="2"></path></svg>
      </div>
      <div class="rulrow">
        <div class="ruler">${rulerSvg()}${RULER_LABELS.map(([t, x]) => html`<span class="rl ${muted(x) ? "in" : ""}" style="left:${x - 673}px">${t}</span>`)}</div>
        <div class="mag"><svg viewBox="0 0 26 28" width="26" height="28"><path d="M4.5 26V13C4.5 7 8 3.5 13 3.5C18 3.5 21.5 7 21.5 13V26" fill="none" stroke="#2d8ceb" stroke-width="6"></path><rect x="2" y="18" width="5" height="8" fill="#1f3a57"></rect><rect x="19" y="18" width="5" height="8" fill="#1f3a57"></rect></svg></div>
        <svg class="pin" viewBox="0 0 16 30" width="16" height="30"><path d="M0 0H15V9L7.5 14L0 9Z" fill="#b0b0b0"></path><path d="M7.5 12V30" stroke="#b0b0b0" stroke-width="2"></path></svg>
      </div>
      <div class="waverow">${waveSvg()}
        <div class="scale">
          ${DB1.concat(DB2).map(([t, y]) => html`<span class="dbt" style="top:${y - 350}px">${t}</span><i class="tk" style="top:${y - 350}px"></i>`)}
          <div class="chd" style="top:${645 - 350}px"></div>
          <div class="lr" style="top:${480 - 350}px">L</div>
          <div class="lr" style="top:${777 - 350}px">R</div>
        </div>
      </div>
      <div class="gbar"><i></i></div>
      <div class="specrow">
        <canvas class="spec" width="1096" height="78"></canvas>
        <div class="hzc"><div class="hz a">Hz</div><div class="hz">Hz</div></div>
      </div>
      <div class="timerow">
        <span class="time">0:28.548</span><span class="x1">1x</span>
        <div class="zooms">${zoomIcon("vp", "#a8a8a8")}${zoomIcon("vm", "#a8a8a8")}${zoomIcon("hp", "#a8a8a8")}${zoomIcon("hm", "#4e4e4e")}${zoomIcon("all", "#4e4e4e")}</div>
      </div>
    </div>`;
  }

  right() {
    return html`<div class="panel rightp">
      <div class="rp a">Essential Sound</div>
      <div class="rp b">No Selection</div>
      <div class="rp c">Preset</div>
      <div class="rp"></div>
    </div>`;
  }

  levels() {
    const tx = (v: number) => 1958 + (v / 3) * 64.3 - 660;
    return html`<div class="panel levels">
      <div class="lt"><span>Levels</span>${I.ham}</div>
      <div class="meter">
        <div class="mc"><div class="g"></div></div><div class="mc"></div>
        <div class="mc"><div class="g"></div></div><div class="mc"></div>
      </div>
      <div class="lscale">
        <span class="lt1" style="left:${672 - 660}px"></span>
        <span class="ll" style="left:${682 - 660}px">dB</span>
        ${LEVEL_VALUES.map(v => html`
          <span class="lt1" style="left:${tx(v)}px"></span>
          <span class="lt1 s" style="left:${tx(v) - 21.4}px"></span>
          <span class="lt1 s" style="left:${tx(v) - 43}px"></span>
          <span class="ll" style="left:${tx(v) + 1}px">${v}</span>`)}
      </div>
    </div>`;
  }

  menu() {
    return html`<div class="menu">${MENU.map(m => m.sep ? html`<div class="msep"></div>` : html`
      <div class="mi ${m.d ? "dis" : ""} ${m.hot ? "hot" : ""}"><span>${m.t}</span><span>${m.k || ""}</span>
      ${m.sub ? html`<svg class="sub" viewBox="0 0 8 14" width="8" height="14"><path d="M1 1L7 7L1 13" fill="none" stroke="#333" stroke-width="1.2"></path></svg>` : ""}</div>`)}</div>`;
  }
}
